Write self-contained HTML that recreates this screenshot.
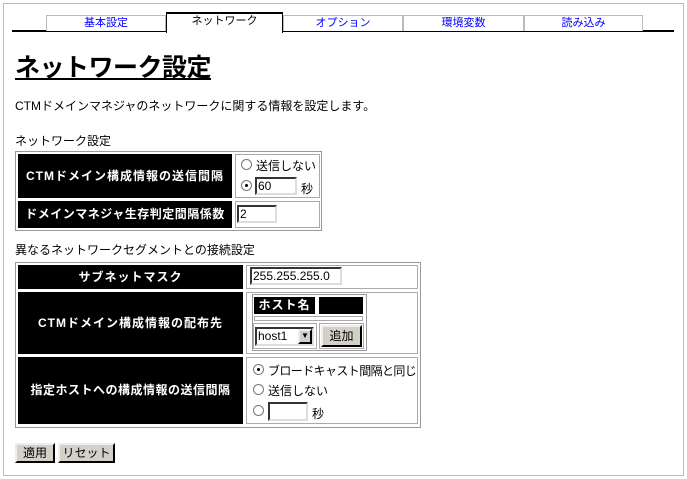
<!DOCTYPE html>
<html><head><meta charset="utf-8"><style>
*{margin:0;padding:0;box-sizing:border-box}
body{width:687px;height:479px;background:#fff;position:relative;overflow:hidden;font-family:"Liberation Sans","Noto Sans CJK JP",sans-serif;font-size:12px;color:#000}
.a{position:absolute}
.frame{left:3px;top:3px;width:681px;height:473px;border:1px solid #bbb}
.tab{position:absolute;top:15px;height:16px;border:1px solid #bbb;border-bottom:none;text-align:center;color:#00f;font-size:11px;line-height:14px;background:#fff}
.blk{position:absolute;background:#000;color:#fff;font-weight:bold;text-align:center;font-size:12px;letter-spacing:1px}
.cell{position:absolute;border:1px solid #aaa}
.tbl{position:absolute;border:1px solid #999}
.inp{position:absolute;border:2px inset #888;border-right-color:#ddd;border-bottom-color:#ddd;background:#fff;font-size:12px;line-height:14px;padding-left:1px}
.rad{position:absolute;width:11px;height:11px;border-radius:50%;border:1px solid #777;background:#fff}
.rad.on::after{content:"";position:absolute;left:3px;top:3px;width:3px;height:3px;background:#000;border-radius:50%}
.btn{position:absolute;background:#d4d0c8;border:2px outset #eee;border-right-color:#555;border-bottom-color:#555;text-align:center;font-size:12px}
</style></head><body>
<div class="a frame"></div>
<div class="a" style="left:12px;top:30px;width:662px;height:2px;background:#000"></div>
<div class="tab" style="left:46px;width:120px">基本設定</div>
<div class="tab" style="left:166px;width:117px;top:12px;height:21px;border:1px solid #000;border-top:2px solid #000;border-bottom:none;color:#000">ネットワーク</div>
<div class="tab" style="left:283px;width:120px">オプション</div>
<div class="tab" style="left:403px;width:121px">環境変数</div>
<div class="tab" style="left:524px;width:119px">読み込み</div>
<div class="a" style="left:15px;top:49px;font-size:25px;font-weight:bold;text-decoration:underline;line-height:38px;letter-spacing:-0.5px">ネットワーク設定</div>
<div class="a" style="left:15px;top:99px;line-height:14px">CTMドメインマネジャのネットワークに関する情報を設定します。</div>
<div class="a" style="left:15px;top:134px;line-height:14px">ネットワーク設定</div>
<div class="tbl" style="left:15px;top:151px;width:307px;height:80px"></div>
<div class="blk" style="left:18px;top:154px;width:214px;height:44px;line-height:44px">CTMドメイン構成情報の送信間隔</div>
<div class="cell" style="left:235px;top:154px;width:85px;height:44px"></div>
<div class="rad" style="left:241px;top:159px"></div><div class="a" style="left:256px;top:157px">送信しない</div>
<div class="rad on" style="left:241px;top:180px"></div><div class="inp" style="left:255px;top:177px;width:42px;height:18px">60</div><div class="a" style="left:301px;top:180px">秒</div>
<div class="blk" style="left:18px;top:201px;width:214px;height:27px;line-height:27px;letter-spacing:0.5px">ドメインマネジャ生存判定間隔係数</div>
<div class="cell" style="left:235px;top:201px;width:85px;height:27px"></div>
<div class="inp" style="left:237px;top:205px;width:40px;height:18px">2</div>
<div class="a" style="left:15px;top:243px;line-height:14px">異なるネットワークセグメントとの接続設定</div>
<div class="tbl" style="left:15px;top:262px;width:406px;height:166px"></div>
<div class="blk" style="left:18px;top:265px;width:225px;height:24px;line-height:24px">サブネットマスク</div>
<div class="cell" style="left:246px;top:265px;width:172px;height:24px"></div>
<div class="inp" style="left:250px;top:267px;width:92px;height:18px">255.255.255.0</div>
<div class="blk" style="left:18px;top:292px;width:225px;height:62px;line-height:62px">CTMドメイン構成情報の配布先</div>
<div class="cell" style="left:246px;top:292px;width:172px;height:62px"></div>
<div class="tbl" style="left:252px;top:294px;width:115px;height:57px"></div>
<div class="blk" style="left:254px;top:297px;width:61px;height:17px;line-height:17px">ホスト名</div>
<div class="a" style="left:319px;top:297px;width:44px;height:17px;background:#000"></div>
<div class="a" style="left:254px;top:316px;width:109px;height:5px;border:1px solid #aaa"></div>
<div class="cell" style="left:253px;top:323px;width:64px;height:26px"></div>
<div class="inp" style="left:255px;top:327px;width:59px;height:19px;line-height:15px">host1</div>
<div class="btn" style="left:298px;top:329px;width:14px;height:15px;font-size:8px;line-height:10px">▼</div>
<div class="cell" style="left:319px;top:323px;width:45px;height:26px"></div>
<div class="btn" style="left:321px;top:325px;width:41px;height:22px;line-height:18px">追加</div>
<div class="blk" style="left:18px;top:357px;width:225px;height:67px;line-height:67px;letter-spacing:0.5px">指定ホストへの構成情報の送信間隔</div>
<div class="cell" style="left:246px;top:357px;width:172px;height:67px"></div>
<div class="rad on" style="left:253px;top:364px"></div><div class="a" style="left:268px;top:362px;letter-spacing:-0.6px">ブロードキャスト間隔と同じ</div>
<div class="rad" style="left:253px;top:384px"></div><div class="a" style="left:268px;top:382px">送信しない</div>
<div class="rad" style="left:253px;top:405px"></div><div class="inp" style="left:268px;top:402px;width:40px;height:19px"></div><div class="a" style="left:312px;top:405px">秒</div>
<div class="btn" style="left:15px;top:443px;width:40px;height:20px;line-height:16px">適用</div>
<div class="btn" style="left:58px;top:443px;width:57px;height:20px;line-height:16px">リセット</div>
</body></html>
